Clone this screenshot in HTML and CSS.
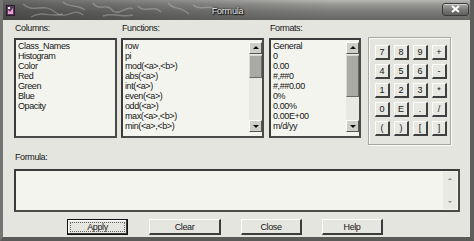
FILE: index.html
```html
<!DOCTYPE html>
<html>
<head>
<meta charset="utf-8">
<link rel="stylesheet" href="styles.css">
</head>
<body>
<div class="window">
  <div class="titlebar">
    <svg class="texture" width="300" height="20" viewBox="0 0 300 20">
      <path d="M20 4 C30 14 40 2 52 12 S70 6 80 15" />
      <path d="M60 2 C66 8 74 4 82 10 M90 3 C96 12 104 2 110 11 C116 16 124 5 130 9" />
      <path d="M135 6 C142 14 150 4 158 12 M165 3 C170 10 178 6 186 14 M190 5 C198 12 206 3 214 10" />
      <path d="M28 17 C40 10 48 18 60 14 M100 16 C112 12 118 18 130 15" />
    </svg>
    <svg class="app-icon" width="9" height="11" viewBox="0 0 9 11">
      <rect x="0.5" y="0.5" width="8" height="10" fill="#5a3a5e" stroke="#2a1a2a"/>
      <path d="M2 9 L2 5 L4 7 L7 3 L7 9 Z" fill="#f0a0d8"/>
      <rect x="2" y="2" width="2" height="2" fill="#fff"/>
    </svg>
    <span class="title">Formula</span>
    <span class="close">
      <svg width="11" height="8" viewBox="0 0 11 8"><path d="M2 1 L9 7 M9 1 L2 7" stroke="#fff" stroke-width="2"/></svg>
    </span>
  </div>
  <div class="body">
    <div class="top">
      <div class="col col-columns">
        <div class="label">Columns:</div>
        <div class="listbox">
          <div class="items">
            <div>Class_Names</div><div>Histogram</div><div>Color</div><div>Red</div><div>Green</div><div>Blue</div><div>Opacity</div>
          </div>
        </div>
      </div>
      <div class="col col-functions">
        <div class="label">Functions:</div>
        <div class="listbox">
          <div class="items">
            <div>row</div><div>pi</div><div>mod(&lt;a&gt;,&lt;b&gt;)</div><div>abs(&lt;a&gt;)</div><div>int(&lt;a&gt;)</div><div>even(&lt;a&gt;)</div><div>odd(&lt;a&gt;)</div><div>max(&lt;a&gt;,&lt;b&gt;)</div><div>min(&lt;a&gt;,&lt;b&gt;)</div>
          </div>
          <div class="scrollbar">
            <div class="arrow up"></div>
            <div class="track"><div class="thumb thumb-functions"></div></div>
            <div class="arrow down"></div>
          </div>
        </div>
      </div>
      <div class="col col-formats">
        <div class="label">Formats:</div>
        <div class="listbox">
          <div class="items">
            <div>General</div><div>0</div><div>0.00</div><div>#,##0</div><div>#,##0.00</div><div>0%</div><div>0.00%</div><div>0.00E+00</div><div>m/d/yy</div>
          </div>
          <div class="scrollbar">
            <div class="arrow up"></div>
            <div class="track"><div class="thumb thumb-formats"></div></div>
            <div class="arrow down"></div>
          </div>
        </div>
      </div>
      <div class="keypad">
        <span class="key">7</span><span class="key">8</span><span class="key">9</span><span class="key">+</span>
        <span class="key">4</span><span class="key">5</span><span class="key">6</span><span class="key">-</span>
        <span class="key">1</span><span class="key">2</span><span class="key">3</span><span class="key">*</span>
        <span class="key">0</span><span class="key">E</span><span class="key">.</span><span class="key">/</span>
        <span class="key">(</span><span class="key">)</span><span class="key">[</span><span class="key">]</span>
      </div>
    </div>
    <div class="label formula-label">Formula:</div>
    <div class="formula-box">
      <div class="formula-text"></div>
      <div class="fscroll">
        <span class="farrow fup"></span>
        <span class="farrow fdown"></span>
      </div>
    </div>
    <div class="buttons">
      <span class="btn btn-default">Apply</span>
      <span class="btn btn-clear">Clear</span>
      <span class="btn">Close</span>
      <span class="btn">Help</span>
    </div>
  </div>
</div>
</body>
</html>
```

FILE: styles.css
```css
* { box-sizing: border-box; }
html, body { margin: 0; padding: 0; }
body {
  width: 474px;
  height: 241px;
  overflow: hidden;
  font-family: "Liberation Sans", Arial, sans-serif;
  font-size: 9px;
  letter-spacing: -0.4px;
  color: #161616;
  background: #6e6e6c;
}
.window {
  width: 474px;
  height: 241px;
  display: flex;
  flex-direction: column;
  background: #6e6e6c;
  border-left: 3px solid #747472;
  border-right: 4px solid #5e5e5c;
  border-bottom: 4px solid #5a5a58;
}
.titlebar {
  position: relative;
  height: 20px;
  flex: none;
  display: flex;
  align-items: center;
  background:
    linear-gradient(to right, rgba(40,40,40,0.55) 0, rgba(60,60,60,0.3) 40%, rgba(0,0,0,0) 70%),
    linear-gradient(to bottom, #b6b6b2 0, #949492 25%, #7a7a78 60%, #666664 100%);
  overflow: hidden;
}
.texture {
  position: absolute;
  left: 0;
  top: 0;
  fill: none;
  stroke: rgba(210,210,205,0.35);
  stroke-width: 1.4;
}
.app-icon {
  position: relative;
  margin-left: 3px;
  margin-top: 1px;
}
.title {
  position: relative;
  flex: 1;
  text-align: center;
  padding-right: 2px;
  color: #f4f4f4;
  font-size: 9px;
  letter-spacing: -0.2px;
  text-shadow: 0 0 1px #000, 0 0 2px #111, 1px 1px 1px #000;
  margin-top: 2px;
}
.close {
  position: relative;
  width: 27px;
  height: 13px;
  margin-right: 1px;
  margin-top: -2px;
  border: 1px solid #3a3a3a;
  border-radius: 3px;
  background: linear-gradient(to bottom, #a8a8a6 0, #7c7c7a 50%, #5e5e5c 100%);
  box-shadow: inset 0 1px 0 rgba(255,255,255,0.5);
  display: flex;
  align-items: center;
  justify-content: center;
}
.body {
  flex: 1;
  background: #e5e5df;
  padding: 3px 0 0 11px;
  display: flex;
  flex-direction: column;
}
.label {
  height: 10px;
  line-height: 10px;
  padding-left: 1px;
}
.top {
  display: flex;
  align-items: flex-start;
  height: 122px;
}
.col .label { margin-bottom: 5px; }
.col-columns { width: 103px; }
.col-functions { width: 143px; margin-left: 4px; }
.col-formats { width: 92px; margin-left: 5px; }
.listbox {
  height: 100px;
  border: 2px solid #3a3a3a;
  border-right-color: #4a4a48;
  border-bottom-color: #4a4a48;
  background: #f4f4ef;
  display: flex;
}
.items {
  flex: 1;
  padding: 1px 0 0 2px;
  line-height: 10px;
  overflow: hidden;
  white-space: nowrap;
}
.scrollbar {
  width: 13px;
  margin: 2px 0 4px;
  display: flex;
  flex-direction: column;
  background: #e9e9e4;
}
.arrow {
  height: 12px;
  background: #cfcfca;
  border-top: 1px solid #fff;
  border-left: 1px solid #fff;
  border-right: 1px solid #555;
  border-bottom: 1px solid #555;
  position: relative;
}
.arrow::after {
  content: "";
  position: absolute;
  left: 3px;
  top: 3px;
  border-left: 3px solid transparent;
  border-right: 3px solid transparent;
}
.arrow.up::after { border-bottom: 3px solid #111; }
.arrow.down::after { border-top: 3px solid #111; top: 4px; }
.track {
  flex: 1;
  padding-top: 1px;
}
.thumb {
  background: #a9a9a5;
  border-top: 1px solid #d8d8d4;
  border-left: 1px solid #d8d8d4;
  border-right: 1px solid #6a6a68;
  border-bottom: 1px solid #6a6a68;
}
.thumb-functions { height: 23px; }
.thumb-formats { height: 42px; }
.keypad {
  width: 83px;
  height: 108px;
  margin-left: 7px;
  margin-top: 14px;
  border: 1px solid #a6a6a2;
  box-shadow: inset 1px 1px 0 #fafaf6, 1px 1px 0 #fafaf6;
  padding: 7px 0 0 6px;
  display: grid;
  grid-template-columns: repeat(4, 15px);
  grid-auto-rows: 15px;
  column-gap: 4px;
  row-gap: 4px;
  align-content: start;
}
.key {
  display: flex;
  align-items: center;
  justify-content: center;
  background: #e8e8e3;
  border-top: 1px solid #fdfdfb;
  border-left: 1px solid #fdfdfb;
  border-right: 2px solid #404040;
  border-bottom: 2px solid #404040;
  font-size: 9px;
  letter-spacing: 0;
  line-height: 1;
}
.formula-label {
  margin-top: 7px;
}
.formula-box {
  margin-top: 7px;
  width: 446px;
  height: 43px;
  border: 2px solid #3a3a3a;
  border-right-color: #4a4a48;
  border-bottom-color: #4a4a48;
  background: #f4f4ef;
  display: flex;
}
.formula-text { flex: 1; }
.fscroll {
  width: 14px;
  margin: 1px 1px 1px 0;
  background: #e9e9e4;
  display: flex;
  flex-direction: column;
  justify-content: space-between;
  align-items: center;
  padding: 6px 0 6px;
}
.farrow {
  width: 0;
  height: 0;
  border-left: 2px solid transparent;
  border-right: 2px solid transparent;
}
.fup { border-bottom: 2px solid #8a8a88; }
.fdown { border-top: 2px solid #8a8a88; }
.buttons {
  margin-top: 7px;
  padding-left: 53px;
  display: flex;
  height: 16px;
}
.btn {
  width: 61px;
  height: 16px;
  margin-right: 20px;
  display: flex;
  align-items: center;
  justify-content: center;
  background: #e6e6e1;
  border-top: 1px solid #fdfdfb;
  border-left: 1px solid #fdfdfb;
  border-right: 2px solid #3c3c3c;
  border-bottom: 2px solid #3c3c3c;
  font-size: 9px;
}
.btn-clear { width: 72px; }
.btn-default {
  border: 1px solid #111;
  box-shadow: inset -1px -1px 0 #3c3c3c, inset 1px 1px 0 #fdfdfb;
  outline: 1px dotted #666;
  outline-offset: -4px;
  margin-right: 21px;
}
```
